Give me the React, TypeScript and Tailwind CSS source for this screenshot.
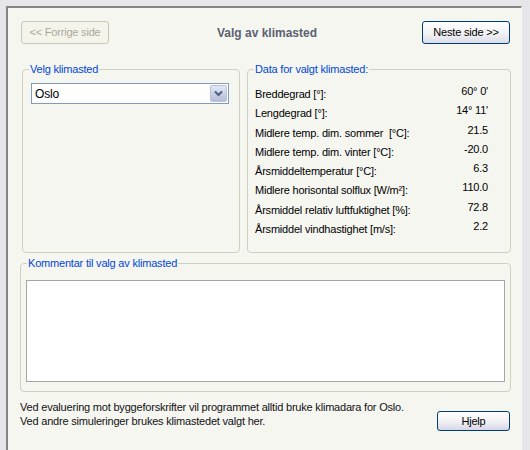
import React from "react";

const rows: [string, string][] = [
  ["Breddegrad [°]:", "60° 0'"],
  ["Lengdegrad [°]:", "14° 11'"],
  ["Midlere temp. dim. sommer  [°C]:", "21.5"],
  ["Midlere temp. dim. vinter [°C]:", "-20.0"],
  ["Årsmiddeltemperatur [°C]:", "6.3"],
  ["Midlere horisontal solflux [W/m²]:", "110.0"],
  ["Årsmiddel relativ luftfuktighet [%]:", "72.8"],
  ["Årsmiddel vindhastighet [m/s]:", "2.2"],
];

function GroupBox({
  title,
  className,
  children,
}: {
  title: string;
  className?: string;
  children?: React.ReactNode;
}) {
  return (
    <fieldset className={`border border-[#d0d0bf] rounded-[4px] ${className ?? ""}`}>
      <legend className="ml-[6px] px-[1px] text-[#0046d5] leading-[13px]">{title}</legend>
      {children}
    </fieldset>
  );
}

export default function App() {
  return (
    <div
      className="w-[530px] h-[450px] bg-[#e6e6ea] pt-[6px] pl-[6px] pr-[8px] flex text-[11px] tracking-[-0.2px] text-black"
      style={{ fontFamily: '"Liberation Sans", Arial, sans-serif' }}
    >
      <div className="flex-1 flex flex-col border-l-2 border-t-2 border-[#858585] border-r border-r-[#fbfbfb] bg-[#f6f6f1] pl-[12px] pr-[10px] pt-[13px]">
        {/* top bar */}
        <div className="flex items-center justify-between mx-px h-[23px]">
          <button
            disabled
            className="w-[88px] h-[23px] rounded-[3px] border border-[#c9c7ba] bg-[#f5f4ea] text-[#aca899]"
          >
            &lt;&lt; Forrige side
          </button>
          <h1 className="font-bold text-[12px] tracking-normal text-[#5b6170] pl-[3px]">Valg av klimasted</h1>
          <button className="w-[88px] h-[23px] rounded-[3px] border border-[#003c74] bg-linear-to-b from-white via-[#f4f4f6] to-[#dcdde8]">
            Neste side &gt;&gt;
          </button>
        </div>

        {/* groupboxes */}
        <div className="flex gap-[7px] mt-[19px] pl-[2px]">
          <GroupBox title="Velg klimasted" className="w-[218px] h-[190px]">
            <div className="ml-[8px] mt-[7px] w-[198px] h-[21px] border border-[#7f9db9] bg-white flex items-center justify-between pl-[3px] pr-px">
              <span className="text-[12px]">Oslo</span>
              <div className="w-[17px] h-[17px] rounded-[2px] border border-[#b7c2dd] bg-linear-to-b from-[#e3e7f4] to-[#b5bdd8] flex items-center justify-center">
                <svg width="9" height="7" viewBox="0 0 9 7">
                  <path d="M1 1.5 L4.5 5 L8 1.5" fill="none" stroke="#4d6185" strokeWidth="2" />
                </svg>
              </div>
            </div>
          </GroupBox>

          <GroupBox title="Data for valgt klimasted:" className="w-[264px] h-[190px]">
            <div className="mt-[6px] pl-[7px] pr-[22px]">
              {rows.map(([label, value]) => (
                <div key={label} className="flex items-start justify-between h-[19.3px] leading-[19px]">
                  <span className="pt-[3px] whitespace-pre">{label}</span>
                  <span>{value}</span>
                </div>
              ))}
            </div>
          </GroupBox>
        </div>

        {/* comment */}
        <GroupBox title="Kommentar til valg av klimasted" className="mt-[4px] h-[135px] w-[491px]">
          <textarea className="block mt-[10px] ml-[5px] w-[479px] h-[102px] bg-white border border-[#a5a5a5] resize-none outline-none" />
        </GroupBox>

        {/* bottom */}
        <div className="flex items-start justify-between mt-[8px] mr-px">
          <p className="leading-[14px] text-[#111]">
            Ved evaluering mot byggeforskrifter vil programmet alltid bruke klimadara for Oslo.
            <br />
            Ved andre simuleringer brukes klimastedet valgt her.
          </p>
          <button className="mt-[11px] w-[73px] h-[20px] rounded-[3px] border border-[#003c74] bg-linear-to-b from-white via-[#f2f2f5] to-[#d6d7e6]">
            Hjelp
          </button>
        </div>
      </div>
    </div>
  );
}
